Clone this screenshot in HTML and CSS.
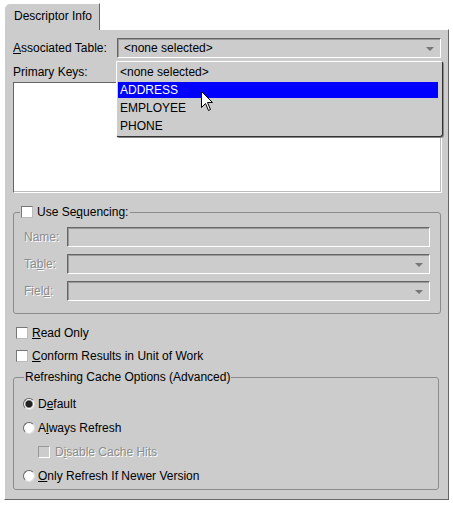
FILE: index.html
```html
<!DOCTYPE html>
<html>
<head>
<meta charset="utf-8">
<link rel="stylesheet" href="styles.css">
</head>
<body>
<div class="window">
  <div class="tabs"><div class="tab">Descriptor Info</div></div>
  <div class="panel">
    <div class="assoc">
      <div class="lbl"><u>A</u>ssociated Table:</div>
      <div class="combo"><span class="ctext">&lt;none selected&gt;</span><span class="arrow"></span></div>
      <div class="popup">
        <div class="item">&lt;none selected&gt;</div>
        <div class="item sel">ADDRESS</div>
        <div class="item">EMPLOYEE</div>
        <div class="item">PHONE</div>
      </div>
      <svg class="cursor" width="13" height="21" viewBox="0 0 13 21"><path d="M0.5 0.5 L0.5 16.5 L4.5 12.5 L7.5 19.5 L9.5 18.5 L6.5 11.5 L11.5 11.5 Z" fill="#fff" stroke="#000" stroke-width="1"/></svg>
    </div>
    <div class="pklabel">Primary Keys:</div>
    <div class="listbox"></div>

    <fieldset class="group seq">
      <legend class="leg"><span class="cb"></span><span>Use Se<u>q</u>uencing:</span></legend>
      <div class="fields">
        <div class="flbl dis">Name:</div>
        <div class="tf"></div>
        <div class="flbl dis">Ta<u>b</u>le:</div>
        <div class="tf"><span class="arrow"></span></div>
        <div class="flbl dis">Fiel<u>d</u>:</div>
        <div class="tf"><span class="arrow"></span></div>
      </div>
    </fieldset>

    <div class="chk first"><span class="cb"></span><span><u>R</u>ead Only</span></div>
    <div class="chk"><span class="cb"></span><span><u>C</u>onform Results in Unit of Work</span></div>

    <fieldset class="group refresh">
      <legend class="leg2">Refreshing Cache Options (Advanced)</legend>
      <div class="opt first"><span class="rb on"></span><span>D<u>e</u>fault</span></div>
      <div class="opt"><span class="rb"></span><span>A<u>l</u>ways Refresh</span></div>
      <div class="opt sub"><span class="cb dcb"></span><span class="dis">D<u>i</u>sable Cache Hits</span></div>
      <div class="opt"><span class="rb"></span><span><u>O</u>nly Refresh If Newer Version</span></div>
    </fieldset>
  </div>
</div>
</body>
</html>
```
FILE: styles.css
```css
* { box-sizing: border-box; }
body {
  margin: 0;
  background: #fff;
  font: 12px "Liberation Sans", Arial, sans-serif;
  color: #000;
}
.window { width: 453px; padding: 3px 4px 0 4px; }
.tabs { display: flex; height: 26px; }
.tab {
  position: relative;
  z-index: 1;
  width: 96px;
  height: 27px;
  background: #cccccc;
  border-top: 1px solid #fff;
  border-left: 1px solid #fff;
  border-right: 1px solid #666;
  border-top-left-radius: 6px;
  padding-left: 9px;
  line-height: 25px;
}
.panel {
  width: 445px;
  height: 471px;
  background: #cccccc;
  border-top: 1px solid #fff;
  border-left: 1px solid #fff;
  border-right: 1px solid #666;
  border-bottom: 1px solid #666;
  padding: 8px 7px 0 8px;
}
.assoc { position: relative; display: flex; align-items: center; height: 20px; }
.lbl { width: 104px; }
.combo {
  position: relative;
  flex: 1;
  height: 20px;
  border: 1px solid;
  border-color: #666 #fff #fff #666;
  box-shadow: inset 1px 1px 0 #999;
  padding-left: 6px;
  line-height: 18px;
}
.arrow {
  position: absolute;
  right: 6px;
  top: 8px;
  width: 0; height: 0;
  border-left: 4px solid transparent;
  border-right: 4px solid transparent;
  border-top: 4px solid #777;
}
.popup {
  position: absolute;
  z-index: 2;
  left: 103px;
  top: 23px;
  width: 327px;
  height: 76px;
  background: #cccccc;
  border: 1px solid;
  border-color: #fff #333 #333 #fff;
  box-shadow: 1px 1px 0 #888;
  border-radius: 0 2px 3px 2px;
  padding-top: 2px;
}
.item { height: 16px; line-height: 16px; margin: 0 4px 2px 1px; padding-left: 2px; }
.item.sel { background: #0000ff; color: #fff; }
.cursor { position: absolute; z-index: 3; left: 188px; top: 53px; }
.pklabel { margin-top: 7px; margin-bottom: 3px; line-height: 14px; }
.listbox {
  height: 111px;
  width: 429px;
  background: #fff;
  border: 1px solid;
  border-color: #666 #fff #fff #666;
  box-shadow: inset -1px -1px 0 #bbb;
}
.group {
  margin: 0;
  border: 1px solid #8c8c8c;
  border-radius: 3px;
  padding: 0 10px;
  min-width: 0;
}
.seq { margin-top: 12px; width: 428px; padding-bottom: 12px; }
.leg { display: flex; align-items: center; gap: 4px; padding: 0 2px 0 1px; margin-left: -4px; height: 14px; line-height: 14px; }
.fields {
  margin-top: 8px;
  display: grid;
  grid-template-columns: 43px 1fr;
  row-gap: 7px;
  align-items: center;
}
.tf {
  position: relative;
  height: 20px;
  border: 1px solid;
  border-color: #666 #fff #fff #666;
  box-shadow: inset 1px 1px 0 #999;
}
.dis { color: #8c8c8c; text-shadow: 1px 1px 0 #fff; }
.cb {
  display: inline-block;
  width: 12px;
  height: 12px;
  background: #fff;
  border: 1px solid;
  border-color: #777 #bbb #bbb #777;
  flex: none;
}
.dcb { background: #cccccc; border-color: #999 #fff #fff #999; }
.chk { display: flex; align-items: center; gap: 4px; height: 23px; padding-left: 3px; }
.chk.first { margin-top: 7px; }
.refresh { margin-top: 3px; width: 426px; padding-bottom: 1px; }
.leg2 { padding: 0 1px; margin-left: 0; line-height: 14px; height: 14px; }
.opt { display: flex; align-items: center; gap: 3px; height: 24px; margin-left: -1px; }
.opt.first { margin-top: 8px; }
.opt.sub { padding-left: 15px; gap: 5px; }
.rb {
  display: inline-block;
  width: 12px;
  height: 12px;
  border-radius: 50%;
  background: #fff;
  border: 1px solid;
  border-color: #666 #ddd #ddd #666;
  flex: none;
}
.rb.on { background: radial-gradient(circle, #222 0 3px, #777 3.5px, #fff 4.5px); }
```
